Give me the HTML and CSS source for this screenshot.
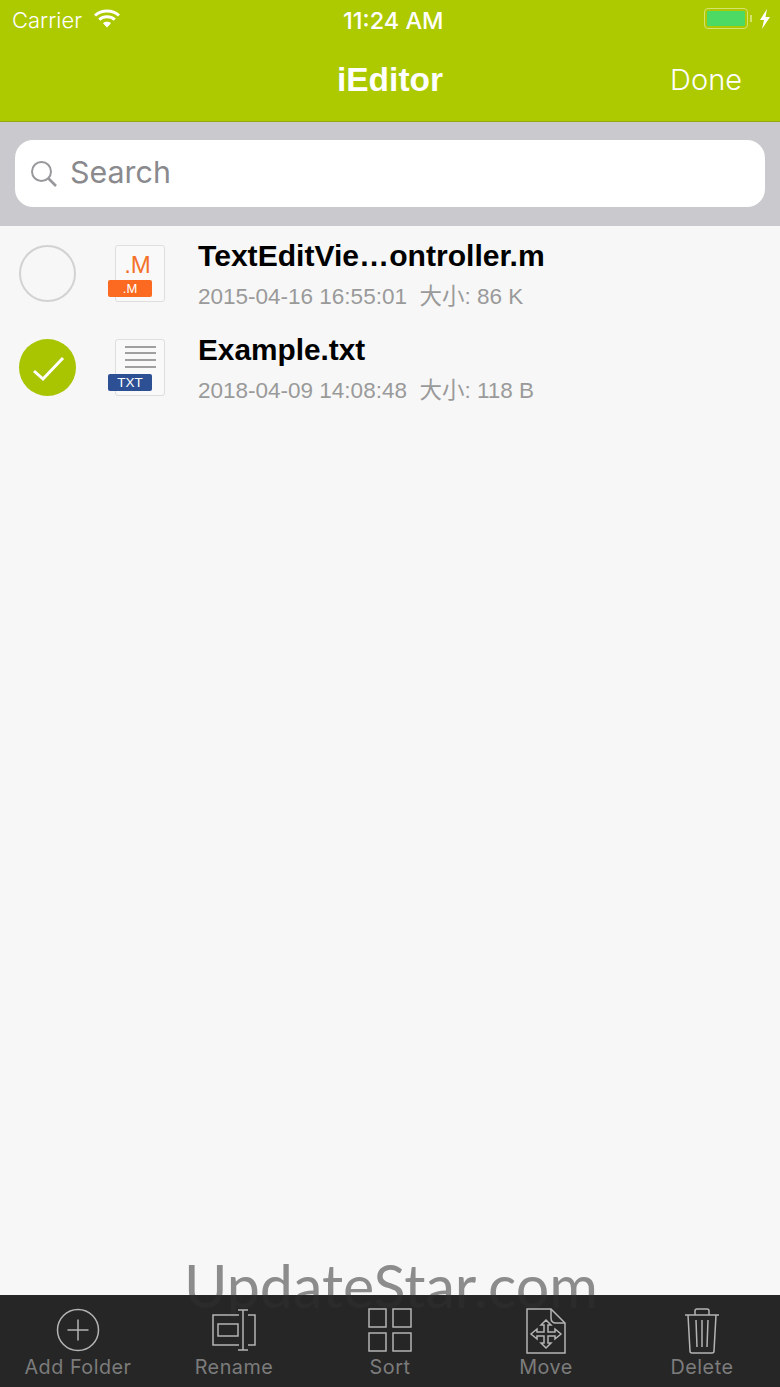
FILE: index.html
```html
<!DOCTYPE html>
<html lang="en">
<head>
<meta charset="utf-8">
<title>iEditor</title>
<link rel="stylesheet" href="styles.css">
</head>
<body>
<div class="app">
  <header class="top">
    <div class="status">
      <div class="status-left">
        <span>Carrier</span>
        <svg class="wifi" width="26" height="19" viewBox="0 0 26 19"><path d="M1 6.500C7.600.6 18.400.6 25 6.500" fill="none" stroke="#fff" stroke-width="3"/><path d="M5.200 10.600c4.400-3.800 11.200-3.800 15.600 0" fill="none" stroke="#fff" stroke-width="3"/><path d="M9 14.200c2.300-1.900 5.700-1.900 8 0l-4 4.300z" fill="#fff"/></svg>
      </div>
      <div class="status-time">11:24 AM</div>
      <div class="status-right">
        <div class="battery"><div class="battery-fill"></div></div>
        <div class="battery-tip"></div>
        <svg class="bolt" width="12" height="20" viewBox="0 0 12 20"><path d="M8 0 1 11h4l-2 9 8-12H6.500z" fill="#fff"/></svg>
      </div>
    </div>
    <nav class="nav">
      <h1 class="nav-title">iEditor</h1>
      <span class="nav-done">Done</span>
    </nav>
  </header>
  <div class="searchbar">
    <div class="field">
      <svg class="search-icon" width="28" height="28" viewBox="0 0 28 28"><circle cx="11.500" cy="11.500" r="9.500" fill="none" stroke="#98989c" stroke-width="2"/><path d="m18.500 18.500 7.500 7.500" stroke="#98989c" stroke-width="2.600" fill="none"/></svg>
      <span class="search-text">Search</span>
    </div>
  </div>
  <main class="list">
    <div class="row">
      <div class="check"></div>
      <div class="file">
        <div class="page"><span class="ext-big">.M</span></div>
        <div class="tag tag-m">.M</div>
      </div>
      <div class="info">
        <div class="name">TextEditVie…ontroller.m</div>
        <div class="meta">2015-04-16 16:55:01&nbsp;&nbsp;大小: 86 K</div>
      </div>
    </div>
    <div class="row">
      <div class="check check-on">
        <svg width="57" height="57" viewBox="0 0 57 57"><path d="m15 32 9 8 20-21" fill="none" stroke="#fff" stroke-width="3"/></svg>
      </div>
      <div class="file">
        <div class="page"><div class="lines"><i></i><i></i><i></i><i></i></div></div>
        <div class="tag tag-txt">TXT</div>
      </div>
      <div class="info">
        <div class="name name-b">Example.txt</div>
        <div class="meta">2018-04-09 14:08:48&nbsp;&nbsp;大小: 118 B</div>
      </div>
    </div>
    <div class="watermark">UpdateStar.com</div>
  </main>
  <footer class="toolbar">
    <div class="tool">
      <svg width="44" height="44" viewBox="0 0 44 44" fill="none" stroke="#b4b4b4" stroke-width="1.500"><circle cx="22" cy="22" r="20.500"/><path d="M22 11.500v21M11.500 22h21"/></svg>
      <span>Add Folder</span>
    </div>
    <div class="tool">
      <svg width="46" height="44" viewBox="0 0 46 44" fill="none" stroke="#b4b4b4" stroke-width="1.500"><path d="M28 7H2v30h26M37 7h7v30h-7"/><rect x="7" y="16" width="20" height="12"/><path d="M32 2v40M27 2h10M27 42h10"/></svg>
      <span>Rename</span>
    </div>
    <div class="tool">
      <svg width="44" height="44" viewBox="0 0 44 44" fill="none" stroke="#b4b4b4" stroke-width="1.500"><rect x="1" y="1" width="17" height="18"/><rect x="25" y="1" width="18" height="18"/><rect x="1" y="25" width="17" height="18"/><rect x="25" y="25" width="18" height="18"/></svg>
      <span>Sort</span>
    </div>
    <div class="tool">
      <svg width="40" height="46" viewBox="0 0 40 46" fill="none" stroke="#b4b4b4" stroke-width="1.500"><path d="M1 1h24l14 14v30H1z"/><path d="M25 1v9c0 3 2 5 5 5h9"/><path d="M20 12l5 5h-3v7h7v-3l6 5-6 5v-3h-7v7h3l-5 5-5-5h3v-7h-7v3l-6-5 6-5v3h7v-7h-3z"/></svg>
      <span>Move</span>
    </div>
    <div class="tool">
      <svg width="36" height="46" viewBox="0 0 36 46" fill="none" stroke="#b4b4b4" stroke-width="1.500"><path d="M1 7h34M11 7V3c0-1 1-2 2-2h10c1 0 2 1 2 2v4M4 7l2 36c0 1 1 2 2 2h20c1 0 2-1 2-2l2-36M12 12l1 27M18 12v27M24 12l-1 27"/></svg>
      <span>Delete</span>
    </div>
  </footer>
</div>
</body>
</html>
```
FILE: styles.css
```css
* { box-sizing: border-box; }
html, body { margin: 0; padding: 0; }
body { background: #f7f7f7; font-family: "Liberation Sans", sans-serif; }
.app { width: 780px; height: 1387px; display: flex; flex-direction: column; overflow: hidden; background: #272727; }

.top { height: 122px; background: #adc900; border-bottom: 1px solid #94a80f; color: #fff; }
.status { height: 40px; display: flex; align-items: center; justify-content: space-between; padding: 0 9px 0 12px; font-family: "Inter", sans-serif; font-size: 22px; font-weight: 300; position: relative; }
.status-left { display: flex; align-items: center; gap: 12px; }
.wifi { margin-top: -4px; }
.status-time { position: absolute; left: 343px; top: 6px; font-size: 23.500px; font-weight: 500; }
.status-right { display: flex; align-items: center; margin-top: -3px; }
.battery { width: 44px; height: 21px; border: 1.500px solid #d5e46e; border-radius: 4px; padding: 2px; }
.battery-fill { height: 100%; background: #4cd964; border-radius: 1px; }
.battery-tip { width: 2px; height: 7px; background: #d5e46e; margin: 0 7px 0 2px; }

.nav { height: 81px; display: flex; align-items: center; justify-content: center; position: relative; padding-bottom: 1px; }
.nav-title { margin: 0; font-size: 33.500px; font-weight: 700; font-family: "Liberation Sans", sans-serif; }
.nav-done { position: absolute; right: 38px; top: 22px; font-size: 29px; font-family: "Inter", sans-serif; font-weight: 300; }

.searchbar { height: 104px; background: #c9c9ce; padding: 18px 15px 19px; }
.field { height: 67px; background: #fff; border-radius: 18px; display: flex; align-items: center; padding-left: 15px; gap: 12px; color: #8a8a8e; font-family: "Inter", sans-serif; font-size: 30.400px; }
.search-icon { flex: none; }
.search-text { margin-top: -3px; }

.list { flex: 1; position: relative; background: #f7f7f7; }
.row { height: 94px; display: flex; align-items: center; padding-left: 19px; }
.check { width: 57px; height: 57px; border-radius: 50%; border: 2.500px solid #d2d2d2; flex: none; }
.check-on { background: #a9c400; border: 0; }
.check-on svg { display: block; }

.file { width: 57px; height: 57px; margin-left: 32px; position: relative; flex: none; }
.page { position: absolute; left: 7px; top: 0; width: 50px; height: 57px; background: #f9f9f9; border: 1.500px solid #dedede; border-radius: 3px; text-align: center; }
.ext-big { display: block; color: #f4712a; font-size: 24px; line-height: 28px; margin-top: 5px; margin-right: 5px; }
.lines { display: flex; flex-direction: column; gap: 4.700px; padding: 6px 8px 0 9px; }
.lines i { display: block; height: 2px; background: #a0a0a0; }
.tag { position: absolute; left: 0; top: 35px; width: 44px; height: 17px; border-radius: 2px; color: #fff; text-align: center; line-height: 17px; }
.tag-m { background: #fb6a20; font-size: 13px; }
.tag-txt { background: #2d5094; font-size: 13.500px; }

.info { margin-left: 33px; margin-top: 3px; }
.name { font-size: 30.100px; font-weight: 700; color: #000; line-height: 34px; white-space: nowrap; }
.name-b { font-size: 29.800px; }
.meta { font-size: 22.500px; color: #9a9a9a; line-height: 26px; margin-top: 11px; white-space: nowrap; font-family: "Liberation Sans", "Noto Sans CJK SC", sans-serif; }

.watermark { position: absolute; left: 184px; top: 1020px; color: #8c8c8c; font-family: "Lato", sans-serif; font-size: 59.200px; font-weight: 400; line-height: 80px; white-space: nowrap; }

.toolbar { height: 92px; background: rgba(39, 39, 39, .96); display: flex; justify-content: center; flex: none; padding: 13px 0 0; position: relative; }
.tool { width: 156px; height: 72px; display: flex; flex-direction: column; align-items: center; justify-content: space-between; color: #7c7c7c; font-family: "Inter", sans-serif; font-size: 19.800px; line-height: 26px; letter-spacing: .5px; }
.tool svg { display: block; }
```
